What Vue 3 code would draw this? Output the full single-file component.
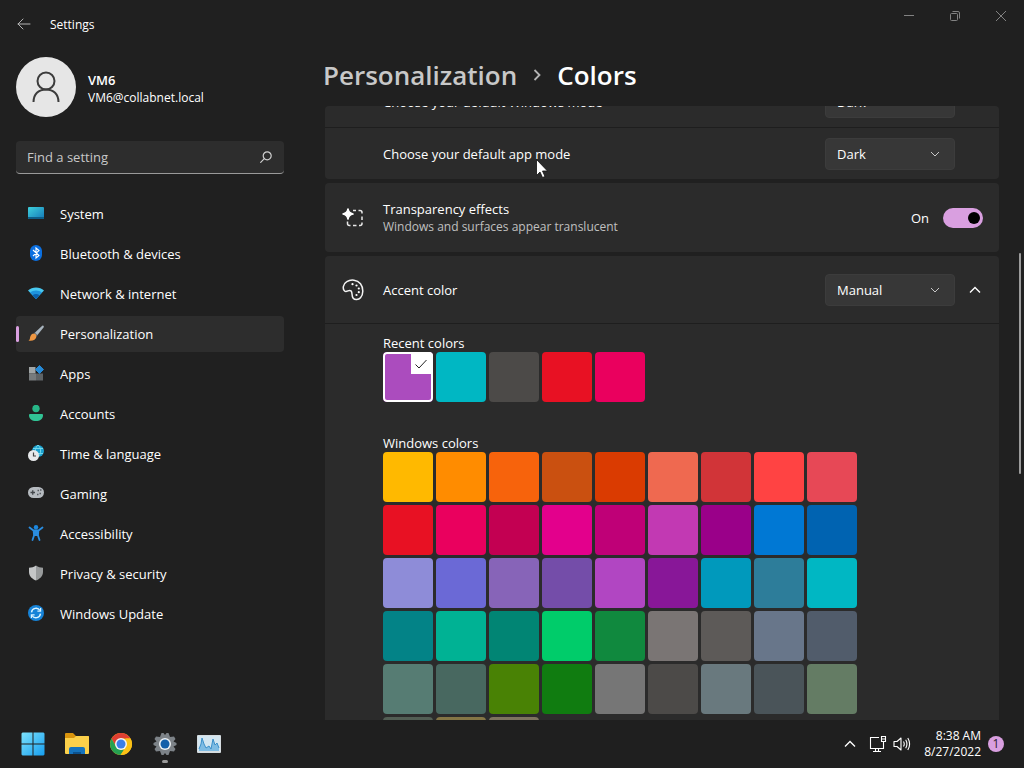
<template>
  <div class="desktop">
    <header class="titlebar">
      <button class="back" aria-label="Back">
        <svg width="14" height="12" viewBox="0 0 14 12" fill="none" stroke="#b4b4b4" stroke-linecap="round" stroke-linejoin="round">
          <path d="M6 1L1 6L6 11M1 6H13" />
        </svg>
      </button>
      <span class="app-name">Settings</span>
      <div class="window-controls">
        <button aria-label="Minimize">
          <svg width="10" height="10" viewBox="0 0 10 10"><path d="M0 4.5H10" stroke="#828282" /></svg>
        </button>
        <button aria-label="Restore">
          <svg width="10" height="10" viewBox="0 0 10 10" fill="none" stroke="#828282">
            <rect x="0.5" y="2.5" width="7" height="7" rx="1" />
            <path d="M2.5 0.5H8Q9.5 0.5 9.5 2V7.5" />
          </svg>
        </button>
        <button aria-label="Close">
          <svg width="12" height="12" viewBox="0 0 12 12"><path d="M1 1L11 11M11 1L1 11" stroke="#828282" /></svg>
        </button>
      </div>
    </header>

    <div class="body">
      <aside class="sidebar">
        <div class="account">
          <div class="avatar">
            <svg width="28" height="32" viewBox="0 0 28 32" fill="none" stroke="#3c3c3c" stroke-width="2">
              <circle cx="14" cy="10" r="8.5" />
              <path d="M1.5 31C1.5 23 6.5 18.5 14 18.5S26.5 23 26.5 31" />
            </svg>
          </div>
          <div class="account-text">
            <strong>VM6</strong>
            <span>VM6@collabnet.local</span>
          </div>
        </div>

        <div class="search">
          <input type="text" placeholder="Find a setting" aria-label="Find a setting" />
          <svg width="12" height="12" viewBox="0 0 12 12" fill="none" stroke="#d0d0d0" stroke-width="1.2">
            <circle cx="7.2" cy="4.8" r="4" />
            <path d="M4.3 7.7L0.7 11.3" stroke-linecap="round" />
          </svg>
        </div>

        <nav>
          <a
            v-for="item in navItems"
            :key="item.id"
            href="#"
            :class="{ active: item.id === 'personalization' }"
          >
            <svg width="16" height="18" viewBox="0 0 16 18" fill="none">
              <defs v-if="item.id === 'system'">
                <linearGradient id="screen" x1="0" y1="0" x2="1" y2="1">
                  <stop offset="0" stop-color="#3ed0dc" />
                  <stop offset="1" stop-color="#1479b8" />
                </linearGradient>
                <linearGradient id="shield" x1="0" y1="0" x2="1" y2="0">
                  <stop offset="0.5" stop-color="#c4c6c7" />
                  <stop offset="0.5" stop-color="#989b9c" />
                </linearGradient>
              </defs>
              <template v-if="item.id === 'system'">
                <rect y="2" width="16" height="12" rx="1" fill="url(#screen)" />
                <path d="M0 12H16V13Q16 14 15 14H1Q0 14 0 13Z" fill="#0d5e88" />
              </template>
              <template v-else-if="item.id === 'bluetooth'">
                <rect x="2" width="12" height="16" rx="6" fill="#0b6fe0" />
                <path d="M5 5L11 10.5L8 13V3L11 5.5L5 11" stroke="#fff" stroke-width="1.1" />
              </template>
              <template v-else-if="item.id === 'network'">
                <path d="M0 5.5C4 1.5 12 1.5 16 5.5L8 14Z" fill="#48c8f0" />
                <path d="M2 7.6C5 4.8 11 4.8 14 7.6L8 14Z" fill="#1e93dc" />
                <path d="M4.5 10.2C6.5 8.5 9.5 8.5 11.5 10.2L8 14Z" fill="#0b61ad" />
              </template>
              <template v-else-if="item.id === 'personalization'">
                <path d="M14.5 0.5Q16.5 0.5 15.5 2.5L9 10.5L6.500 8Z" fill="#a9b5bf" />
                <path d="M7 7.5L9.5 10L8.5 11L6 8.8Z" fill="#6d7880" />
                <path d="M6 8.5Q8.5 9 8.5 11.5C8 15 4 16.5 0.5 15.5C2.5 14.5 1.5 13 2.5 11C3.3 9.3 4.5 8.5 6 8.5Z" fill="#ed9642" />
              </template>
              <template v-else-if="item.id === 'apps'">
                <path d="M1 2H7.5V8.5H1Z" fill="#a0a5a6" />
                <path d="M1 8.5H8V15.5H1Z" fill="#777b7d" />
                <path d="M8 8.5H15V15.5H8Z" fill="#5e6366" />
                <path d="M11.5 0.5L15.5 4.5L11.5 8.5L7.5 4.500Z" fill="#2589d6" stroke="#2589d6" stroke-linejoin="round" />
              </template>
              <template v-else-if="item.id === 'accounts'">
                <circle cx="8" cy="3.5" r="3.7" fill="#27b687" />
                <path d="M1 10Q1 9 2 9H14Q15 9 15 10C15 14 12 16 8 16S1 14 1 10Z" fill="#31c495" />
              </template>
              <template v-else-if="item.id === 'time'">
                <circle cx="10" cy="6" r="6" fill="#1ba1cf" />
                <path d="M10 0C6.5 3 6.5 9 10 12C13.5 9 13.5 3 10 0M5 3.5H15M5 8.5H15" stroke="#74d9ec" />
                <circle cx="5.5" cy="10.5" r="5.5" fill="#e7e9eb" />
                <path d="M5.5 7.5V11H8" stroke="#444" stroke-width="1.2" />
              </template>
              <template v-else-if="item.id === 'gaming'">
                <rect y="2" width="16" height="11" rx="5.5" fill="#b6bbc0" />
                <path d="M2.5 7.5H7M4.75 5.2V9.8" stroke="#43474b" stroke-width="1.3" />
                <path d="M9 9.5H10.5M9.5 5.5H11M12 5H13.5M11.5 8.5H13" stroke="#565b60" stroke-width="1.4" />
              </template>
              <template v-else-if="item.id === 'accessibility'">
                <circle cx="8" cy="2.2" r="2.2" fill="#1b87df" />
                <path d="M1.5 2.5L5.5 5.5H10.5L14.5 2.5M5.5 5.5L6.2 10L4.5 15M10.5 5.5L9.8 10L11.5 15" stroke="#2a8de0" stroke-width="1.8" stroke-linecap="round" />
                <path d="M5 5H11L10.5 11H5.5Z" fill="#2a8de0" />
              </template>
              <template v-else-if="item.id === 'privacy'">
                <path d="M8 0.5C10 2 12.5 2.7 15 2.7V7C15 11.5 11.5 14 8 15.5C4.5 14 1 11.5 1 7V2.7C3.5 2.7 6 2 8 0.5Z" fill="url(#shield)" />
              </template>
              <template v-else>
                <circle cx="8" cy="8" r="8" fill="#1683d8" />
                <path d="M3.5 7.3A4.6 4.6 0 0 1 12 5.5M12.5 8.7A4.6 4.6 0 0 1 4 10.5" stroke="#d9f3ff" stroke-width="1.4" />
                <path d="M12.6 3V6.2H9.4M3.4 13V9.8H6.6" stroke="#d9f3ff" stroke-width="1.2" />
              </template>
            </svg>
            {{ item.label }}
          </a>
        </nav>
      </aside>

      <main>
        <h1>
          <a href="#">Personalization</a>
          <svg width="8" height="12" viewBox="0 0 8 12" fill="none" stroke="#b4b4b4" stroke-width="1.8">
            <path d="M1.5 1L6.5 6L1.5 11" />
          </svg>
          <span>Colors</span>
        </h1>

        <div class="scroll-area">
          <div ref="viewport" class="viewport">
            <section class="card modes">
              <div class="row compact">
                <label class="row-label" for="windows-mode">Choose your default Windows mode</label>
                <div class="dropdown">
                  <select id="windows-mode" v-model="windowsMode">
                    <option>Light</option>
                    <option>Dark</option>
                  </select>
                  <svg width="10" height="6" viewBox="0 0 10 6"><path d="M1 1L5 5L9 1" /></svg>
                </div>
              </div>
              <div class="row compact">
                <label class="row-label" for="app-mode">Choose your default app mode</label>
                <div class="dropdown">
                  <select id="app-mode" v-model="appMode">
                    <option>Light</option>
                    <option>Dark</option>
                  </select>
                  <svg width="10" height="6" viewBox="0 0 10 6"><path d="M1 1L5 5L9 1" /></svg>
                </div>
              </div>
            </section>

            <section class="card row">
              <svg class="row-icon" width="22" height="20" viewBox="0 0 22 20" fill="none">
                <path d="M6 1Q6.7 5.3 11 6Q6.7 6.7 6 11Q5.3 6.7 1 6Q5.3 5.3 6 1Z" fill="#fff" stroke="#fff" stroke-width="1.6" stroke-linejoin="round" />
                <path d="M11 2.5H14M16.5 2.5H18Q20 2.5 20 4.5V5.5M20 8.5V12M20 14.5V15.5Q20 17.5 18 17.5H17M14.5 17.5H11M8.5 17.5H7.5Q5.5 17.5 5.5 15.5V13.5" stroke="#e8e8e8" stroke-width="1.5" />
              </svg>
              <label class="row-label" for="transparency">
                Transparency effects
                <small>Windows and surfaces appear translucent</small>
              </label>
              <span class="state">{{ transparency ? "On" : "Off" }}</span>
              <input id="transparency" v-model="transparency" class="toggle" type="checkbox" role="switch" />
            </section>

            <section class="card">
              <div class="row accent">
                <svg class="row-icon" width="22" height="22" viewBox="0 0 22 22" fill="none">
                  <path d="M2.6 12C0.3 10 1 5 4.8 2.7C9 0 15.2 0.7 18.5 4.8C21.7 9 21.4 15.5 18.5 18.8C16.7 20.9 12.8 21.4 11 19C9.4 16.8 10.7 13.5 9 11.9C7 10 4.8 13.9 2.6 12Z" stroke="#f4f4f4" stroke-width="1.5" />
                  <circle cx="10.5" cy="5.2" r="1.1" fill="#fff" />
                  <circle cx="14.5" cy="6.5" r="1.1" fill="#fff" />
                  <circle cx="16.8" cy="9.5" r="1.1" fill="#fff" />
                  <circle cx="16.8" cy="13.2" r="1.1" fill="#fff" />
                  <circle cx="14.5" cy="16" r="1.1" fill="#fff" />
                </svg>
                <label class="row-label" for="accent-mode">Accent color</label>
                <div class="dropdown">
                  <select id="accent-mode" v-model="accentMode">
                    <option>Automatic</option>
                    <option>Manual</option>
                  </select>
                  <svg width="10" height="6" viewBox="0 0 10 6"><path d="M1 1L5 5L9 1" /></svg>
                </div>
                <button class="collapse" aria-label="Collapse">
                  <svg width="12" height="8" viewBox="0 0 12 8" fill="none" stroke="#fff" stroke-width="1.4">
                    <path d="M1 6.5L6 1.5L11 6.5" />
                  </svg>
                </button>
              </div>

              <div class="palettes">
                <fieldset v-for="palette in palettes" :key="palette.name">
                  <legend>{{ palette.name }}</legend>
                  <div class="swatches">
                    <label
                      v-for="color in palette.colors"
                      :key="color"
                      class="swatch"
                      :style="{ backgroundColor: color }"
                    >
                      <input v-model="accent" type="radio" name="accent" :value="palette.name + color" :aria-label="color" />
                      <span v-if="accent === palette.name + color" class="tick">
                        <svg width="12" height="10" viewBox="0 0 12 10" fill="none" stroke="#222">
                          <path d="M0.5 5.5L4 9L11.5 1" />
                        </svg>
                      </span>
                    </label>
                  </div>
                </fieldset>
              </div>
            </section>
          </div>
          <div class="thumb"></div>
        </div>
      </main>
    </div>

    <footer class="taskbar">
      <button aria-label="Start">
        <svg width="24" height="24" viewBox="0 0 24 24">
          <defs>
            <linearGradient id="start" x1="0" y1="0" x2="24" y2="24" gradientUnits="userSpaceOnUse">
              <stop offset="0" stop-color="#7fe3fb" />
              <stop offset="1" stop-color="#149df0" />
            </linearGradient>
          </defs>
          <path fill="url(#start)" d="M1.5 0.5H11.5V11.5H0.5V1.5ZM12.5 0.5H22.5L23.5 1.5V11.5H12.5ZM0.5 12.5H11.5V23.5H1.5L0.5 22.5ZM12.5 12.5H23.5V22.5L22.5 23.5H12.5Z" />
        </svg>
      </button>
      <button aria-label="File Explorer">
        <svg width="26" height="24" viewBox="0 0 26 24">
          <path d="M1 2Q1 1 2 1H9L12 4H24Q25 4 25 5V12H1Z" fill="#d9940d" />
          <path d="M1 6H10L12 4H24Q25 4 25 5V21Q25 22 24 22H2Q1 22 1 21Z" fill="#fbd04a" />
          <path d="M5 22V17Q5 15 7 15H19Q21 15 21 17V22Z" fill="#1573bd" />
          <path d="M9 22V20H17V22Z" fill="#0c518d" />
        </svg>
      </button>
      <button aria-label="Google Chrome">
        <svg width="24" height="24" viewBox="0 0 24 24">
          <circle cx="12" cy="12" r="11" fill="#fbc116" />
          <path d="M2.5 6.5A11 11 0 0 1 21.5 6.5H12L7.2 14.7Z" fill="#df3f32" />
          <path d="M2.5 6.5L7.2 14.7Q9 17.5 12 17.5H16L11.5 23A11 11 0 0 1 2.5 6.5Z" fill="#25a152" />
          <path d="M21.5 6.5A11 11 0 0 1 11.5 23L16.7 14.7L17 6.5Z" fill="#fbc116" />
          <circle cx="12" cy="12" r="6" fill="#f5f5f5" />
          <circle cx="12" cy="12" r="4.5" fill="#3b7ee8" />
        </svg>
      </button>
      <button class="running" aria-label="Settings">
        <svg width="24" height="24" viewBox="0 0 24 24">
          <path d="M8.5 1H10.5L12 3L13.5 1H15.5L17 5L21 4.5L22.5 7L20.5 9.5L23.5 11V13L20.5 14.5L22.5 17L21 19.5L17 19L15.5 23H13.5L12 21L10.5 23H8.5L7 19L3 19.5L1.5 17L3.5 14.5L0.5 13V11L3.5 9.5L1.5 7L3 4.5L7 5Z" fill="#7d8388" />
          <circle cx="12" cy="12" r="6" fill="#eef2f5" />
          <circle cx="12" cy="12" r="4.5" fill="#145fa9" />
        </svg>
      </button>
      <button aria-label="Resource Monitor">
        <svg width="24" height="20" viewBox="0 0 24 20">
          <rect x="0" y="1" width="24" height="18" rx="1" fill="#d5dce0" />
          <rect x="1" y="2" width="22" height="15" fill="#d3e6f1" />
          <path d="M2 15L4 10L5 4L7 10L9 14L12 12L14 15L16 5L18 11L20 9L22 14V17H2Z" fill="#7fbce3" />
          <path d="M2 15L4 10L5 4L7 10L9 14L12 12L14 15L16 5L18 11L20 9L22 14" fill="none" stroke="#3b8fc9" />
        </svg>
      </button>

      <div class="tray">
        <button class="overflow" aria-label="Show hidden icons">
          <svg width="12" height="8" viewBox="0 0 12 8" fill="none" stroke="#fff" stroke-width="1.3">
            <path d="M1 6.5L6 1.5L11 6.5" />
          </svg>
        </button>
        <button aria-label="Network">
          <svg width="18" height="18" viewBox="0 0 18 18" fill="none" stroke="#fff" stroke-width="1.1">
            <path d="M10 2.5H1.5V13.5H14.5V9M4 16.5H12M6.5 13.5V16.5M9.5 13.5V16.5" />
            <path d="M12.5 1.5H16.5V6.5H12.5ZM14.5 6.5V9M12.5 4H16.5" />
          </svg>
        </button>
        <button aria-label="Volume">
          <svg width="18" height="16" viewBox="0 0 18 16" fill="none" stroke="#fff" stroke-width="1.1" stroke-linejoin="round">
            <path d="M1 5.5H4L8 2V14L4 10.5H1ZM10.5 5.5Q12 8 10.5 10.5M12.7 3.7Q15.2 8 12.7 12.3M14.8 2Q18.4 8 14.8 14" />
          </svg>
        </button>
        <button class="clock">
          <span>8:38 AM</span>
          <span>8/27/2022</span>
        </button>
        <button class="badge" aria-label="Notifications">1</button>
      </div>
    </footer>

    <svg class="pointer" width="12" height="20" viewBox="0 0 12 20">
      <path d="M0.5 0.5V16.5L4 13L6.5 18.5L9 17.5L6.5 12H11.5Z" fill="#fff" stroke="#111" stroke-width="0.8" />
    </svg>
  </div>
</template>

<script setup>
import { onMounted, ref } from "vue";

const windowsMode = ref("Dark");
const appMode = ref("Dark");
const accentMode = ref("Manual");
const transparency = ref(true);
const accent = ref("Recent colors#ab4cbe");
const viewport = ref(null);

const navItems = [
  { id: "system", label: "System" },
  { id: "bluetooth", label: "Bluetooth & devices" },
  { id: "network", label: "Network & internet" },
  { id: "personalization", label: "Personalization" },
  { id: "apps", label: "Apps" },
  { id: "accounts", label: "Accounts" },
  { id: "time", label: "Time & language" },
  { id: "gaming", label: "Gaming" },
  { id: "accessibility", label: "Accessibility" },
  { id: "privacy", label: "Privacy & security" },
  { id: "update", label: "Windows Update" },
];

const palettes = [
  {
    name: "Recent colors",
    colors: ["#ab4cbe", "#00b7c3", "#4c4a48", "#e81123", "#ea005e"],
  },
  {
    name: "Windows colors",
    colors: [
      "#ffb900", "#ff8c00", "#f7630c", "#ca5010", "#da3b01", "#ef6950", "#d13438", "#ff4343", "#e74856",
      "#e81123", "#ea005e", "#c30052", "#e3008c", "#bf0077", "#c239b3", "#9a0089", "#0078d4", "#0063b1",
      "#8e8cd8", "#6b69d6", "#8764b8", "#744da9", "#b146c2", "#881798", "#0099bc", "#2d7d9a", "#00b7c3",
      "#038387", "#00b294", "#018574", "#00cc6a", "#10893e", "#7a7574", "#5d5a58", "#68768a", "#515c6b",
      "#567c73", "#486860", "#498205", "#107c10", "#767676", "#4c4a48", "#69797e", "#4a5459", "#647c64",
      "#525e54", "#847545", "#7e735f",
    ],
  },
];

onMounted(() => {
  viewport.value.scrollTop = 29;
});
</script>

<style>
body {
  margin: 0;
  background: #202020;
}
</style>

<style scoped>
.desktop {
  position: relative;
  display: flex;
  flex-direction: column;
  height: 100vh;
  overflow: hidden;
  background: #202020;
  color: #fff;
  font-family: "Open Sans", "Noto Sans", sans-serif;
  font-size: 13px;
  line-height: 18px;
}

button {
  display: flex;
  align-items: center;
  justify-content: center;
  padding: 0;
  border: none;
  background: none;
  color: inherit;
  font: inherit;
}

a {
  color: inherit;
  text-decoration: none;
}

.titlebar {
  display: flex;
  align-items: center;
  flex-shrink: 0;
  height: 48px;
}

.back {
  width: 48px;
  height: 48px;
}

.app-name {
  padding: 2px 0 0 2px;
  font-size: 12px;
}

.window-controls {
  display: flex;
  align-self: flex-start;
  margin-left: auto;
}

.window-controls button {
  width: 46px;
  height: 32px;
}

.body {
  display: flex;
  flex: 1;
  min-height: 0;
}

.sidebar {
  box-sizing: border-box;
  flex-shrink: 0;
  width: 300px;
  padding: 9px 16px 0;
}

.account {
  display: flex;
  align-items: center;
  gap: 12px;
}

.avatar {
  display: flex;
  align-items: center;
  justify-content: center;
  width: 60px;
  height: 60px;
  border-radius: 50%;
  background: #e6e6e6;
}

.account-text {
  display: flex;
  flex-direction: column;
  padding-top: 4px;
}

.account-text strong {
  font-weight: 600;
}

.account-text span {
  font-size: 12px;
}

.search {
  display: flex;
  align-items: center;
  box-sizing: border-box;
  height: 33px;
  margin: 24px 0 22px;
  padding: 0 12px 0 11px;
  border-bottom: 1px solid #9a9a9a;
  border-radius: 4px;
  background: #2d2d2d;
}

.search input {
  flex: 1;
  min-width: 0;
  padding: 0;
  border: none;
  outline: none;
  background: none;
  color: #fff;
  font: inherit;
}

.search input::placeholder {
  color: #c8c8c8;
}

nav {
  display: flex;
  flex-direction: column;
  gap: 4px;
}

nav a {
  display: flex;
  align-items: center;
  gap: 16px;
  height: 36px;
  padding-left: 12px;
  border-radius: 4px;
}

nav a.active {
  position: relative;
  background: #2d2d2d;
}

nav a.active::before {
  content: "";
  position: absolute;
  top: 10px;
  left: 0;
  width: 3px;
  height: 16px;
  border-radius: 2px;
  background: #d99fe0;
}

main {
  display: flex;
  flex: 1;
  flex-direction: column;
  min-width: 0;
  padding: 9px 0 0 23px;
}

h1 {
  display: flex;
  align-items: center;
  gap: 16px;
  margin: 0 0 13px;
  font-size: 26px;
  font-weight: 600;
  line-height: 36px;
}

h1 a {
  color: #c8c8c8;
}

.scroll-area {
  position: relative;
  flex: 1;
  min-height: 0;
  padding: 0 25px 0 2px;
}

.viewport {
  height: 100%;
  overflow: hidden;
  border-radius: 4px 4px 0 0;
}

.card {
  margin-bottom: 4px;
  border-radius: 4px;
  background: #2b2b2b;
}

.row {
  display: flex;
  align-items: center;
  box-sizing: border-box;
  height: 69px;
  padding: 0 16px 0 17px;
}

.row.compact {
  height: 50px;
  padding: 0 44px 0 58px;
}

.row.compact + .row.compact {
  height: 52px;
  border-top: 1px solid #1e1e1e;
}

.row.accent {
  height: 68px;
  padding-right: 12px;
  border-bottom: 1px solid #1e1e1e;
}

.row-icon {
  flex-shrink: 0;
  width: 22px;
  margin-right: 19px;
}

.row-label {
  flex: 1;
}

.row-label small {
  display: block;
  color: #c0c0c0;
  font-size: 12px;
}

.dropdown {
  position: relative;
  width: 130px;
}

.dropdown select {
  display: block;
  box-sizing: border-box;
  width: 100%;
  height: 32px;
  padding: 0 11px;
  appearance: none;
  border: 1px solid #3c3c3c;
  border-radius: 4px;
  background: #373737;
  color: #fff;
  font: inherit;
}

.dropdown svg {
  position: absolute;
  top: 13px;
  right: 15px;
  fill: none;
  stroke: #c8c8c8;
  pointer-events: none;
}

.state {
  margin-right: 14px;
}

.toggle {
  display: flex;
  align-items: center;
  width: 40px;
  height: 20px;
  margin: 0;
  padding: 0 3px;
  box-sizing: border-box;
  appearance: none;
  border-radius: 10px;
  background: #555;
}

.toggle::before {
  content: "";
  width: 12px;
  height: 12px;
  border-radius: 50%;
  background: #000;
}

.toggle:checked {
  justify-content: flex-end;
  background: #d99fe0;
}

.collapse {
  width: 24px;
  height: 32px;
  margin-left: 8px;
}

.palettes {
  display: flex;
  flex-direction: column;
  gap: 32px;
  padding: 10px 58px 24px;
}

fieldset {
  min-width: 0;
  margin: 0;
  padding: 0;
  border: none;
}

legend {
  padding: 0;
}

.swatches {
  display: flex;
  flex-wrap: wrap;
  gap: 3px;
  max-width: 474px;
}

.swatch {
  position: relative;
  width: 50px;
  height: 50px;
  overflow: hidden;
  border-radius: 4px;
}

.swatch input {
  display: block;
  box-sizing: border-box;
  width: 100%;
  height: 100%;
  margin: 0;
  appearance: none;
  border-radius: 4px;
}

.swatch input:checked {
  border: 2px solid #fff;
}

.tick {
  position: absolute;
  top: 0;
  right: 0;
  display: flex;
  align-items: center;
  justify-content: center;
  width: 22px;
  height: 22px;
  padding: 2px 2px 0 0;
  box-sizing: border-box;
  background: #fff;
}

.thumb {
  position: absolute;
  top: 24%;
  right: 3px;
  width: 2px;
  height: 36%;
  border-radius: 1px;
  background: #9c9c9c;
}

.taskbar {
  display: flex;
  flex-shrink: 0;
  height: 48px;
  padding: 0 20px 0 11px;
  background: #1f1f1f;
}

.taskbar > button {
  position: relative;
  width: 44px;
}

.running::after {
  content: "";
  position: absolute;
  bottom: 5px;
  width: 6px;
  height: 3px;
  border-radius: 2px;
  background: #9a9a9a;
}

.tray {
  display: flex;
  align-items: center;
  margin-left: auto;
}

.tray button {
  width: 24px;
}

.tray .overflow {
  margin-right: 4px;
}

.tray .clock {
  flex-direction: column;
  align-items: flex-end;
  width: auto;
  margin: 0 7px 0 10px;
  font-size: 12px;
  line-height: 16px;
}

.tray .badge {
  width: 16px;
  height: 16px;
  border-radius: 50%;
  background: #d99fe0;
  color: #2b1b2e;
  font-size: 12px;
}

.pointer {
  position: absolute;
  top: 159px;
  left: 536px;
  pointer-events: none;
}
</style>
